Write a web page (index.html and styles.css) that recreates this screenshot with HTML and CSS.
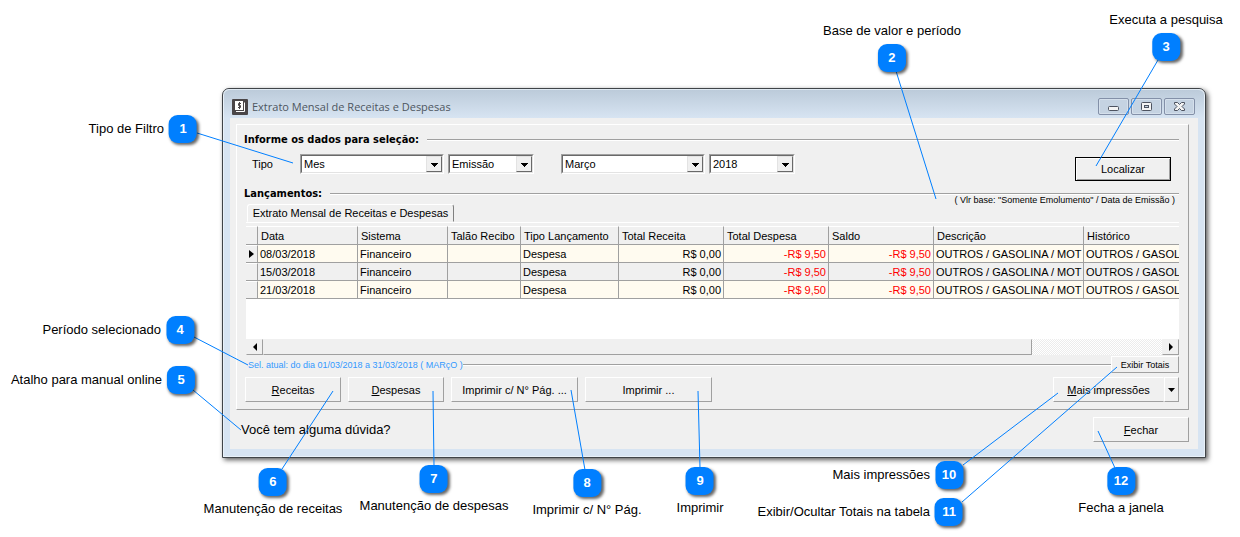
FILE: index.html
```html
<!DOCTYPE html>
<html lang="pt-BR">
<head>
    <meta charset="UTF-8">
    <meta name="viewport" content="width=device-width, initial-scale=1.0">
    <title>Extrato Mensal de Receitas e Despesas</title>
    <link rel="stylesheet" href="styles.css">
</head>
<body>
    <div class="canvas">
        <div class="window">
            <div class="titlebar">
                <svg class="app-icon" viewBox="0 0 16 16" width="16" height="16">
                    <rect width="16" height="16" rx="1" fill="#4a4648"/>
                    <path d="M3 2h8v9H3z" fill="#fff"/>
                    <path d="M4 12.500h8.500v-9" fill="none" stroke="#fff"/>
                    <path d="M9 4.500H6.500v2h2v2H6M7.500 3v7" fill="none" stroke="#4a4648"/>
                </svg>
                <h1>Extrato Mensal de Receitas e Despesas</h1>
                <div class="window-buttons">
                    <button type="button" aria-label="Minimizar">
                        <svg viewBox="0 0 29 15" width="29" height="15"><rect x="9.500" y="7.500" width="10" height="4" rx="1" fill="#f4f4f4" stroke="#4d5360"/></svg>
                    </button>
                    <button type="button" aria-label="Maximizar">
                        <svg viewBox="0 0 29 15" width="29" height="15"><rect x="9.500" y="3.500" width="10" height="8" rx="1" fill="#f4f4f4" stroke="#4d5360"/><rect x="12.500" y="6.500" width="4" height="2" fill="#c5d2df" stroke="#4d5360"/></svg>
                    </button>
                    <button type="button" aria-label="Fechar janela">
                        <svg viewBox="0 0 29 15" width="29" height="15"><path d="M9.500 3.500h3l2 2 2-2h3v1.500l-2.500 2.500 2.500 2.500v1.500h-3l-2-2-2 2h-3V10l2.500-2.500L9.500 5z" fill="#f4f4f4" stroke="#4d5360"/></svg>
                    </button>
                </div>
            </div>

            <div class="client">
                <div class="panel">
                    <div class="section-title"><h2>Informe os dados para seleção:</h2></div>

                    <div class="filters">
                        <label for="tipo">Tipo</label>
                        <div class="combo combo-wide">
                            <select id="tipo"><option>Mes</option></select>
                        </div>
                        <div class="combo combo-small">
                            <select aria-label="Base da data"><option>Emissão</option></select>
                        </div>
                        <div class="combo combo-wide combo-month">
                            <select aria-label="Mês"><option>Março</option></select>
                        </div>
                        <div class="combo combo-small">
                            <select aria-label="Ano"><option>2018</option></select>
                        </div>
                        <button type="button" class="btn btn-default">Localizar</button>
                    </div>

                    <div class="section-title"><h2>Lançamentos:</h2></div>

                    <div class="tab-row">
                        <button type="button" class="tab">Extrato Mensal de Receitas e Despesas</button>
                        <p class="base-info">( Vlr base: "Somente Emolumento" / Data de Emissão )</p>
                    </div>

                    <div class="grid">
                        <table>
                            <colgroup>
                                <col class="c-mark"><col class="c-data"><col class="c-sistema"><col class="c-talao"><col class="c-tipo">
                                <col class="c-valor"><col class="c-valor"><col class="c-valor"><col class="c-desc"><col class="c-desc">
                            </colgroup>
                            <thead>
                                <tr>
                                    <td class="mark"></td><th>Data</th><th>Sistema</th><th>Talão Recibo</th><th>Tipo Lançamento</th>
                                    <th>Total Receita</th><th>Total Despesa</th><th>Saldo</th><th>Descrição</th><th>Histórico</th>
                                </tr>
                            </thead>
                            <tbody>
                                <tr>
                                    <td class="mark"><svg viewBox="0 0 5 8" width="5" height="8"><path d="M0 0l5 4-5 4z"/></svg></td>
                                    <td>08/03/2018</td><td>Financeiro</td><td></td><td>Despesa</td>
                                    <td class="num">R$ 0,00</td><td class="num neg">-R$ 9,50</td><td class="num neg">-R$ 9,50</td>
                                    <td>OUTROS / GASOLINA / MOT</td><td>OUTROS / GASOL</td>
                                </tr>
                                <tr>
                                    <td class="mark"></td>
                                    <td>15/03/2018</td><td>Financeiro</td><td></td><td>Despesa</td>
                                    <td class="num">R$ 0,00</td><td class="num neg">-R$ 9,50</td><td class="num neg">-R$ 9,50</td>
                                    <td>OUTROS / GASOLINA / MOT</td><td>OUTROS / GASOL</td>
                                </tr>
                                <tr>
                                    <td class="mark"></td>
                                    <td>21/03/2018</td><td>Financeiro</td><td></td><td>Despesa</td>
                                    <td class="num">R$ 0,00</td><td class="num neg">-R$ 9,50</td><td class="num neg">-R$ 9,50</td>
                                    <td>OUTROS / GASOLINA / MOT</td><td>OUTROS / GASOL</td>
                                </tr>
                            </tbody>
                        </table>
                    </div>
                    <div class="scrollbar">
                        <button type="button" aria-label="Rolar para a esquerda"><svg viewBox="0 0 4 8" width="4" height="8"><path d="M4 0L0 4l4 4z"/></svg></button>
                        <div class="thumb"></div>
                        <div class="track"></div>
                        <button type="button" aria-label="Rolar para a direita"><svg viewBox="0 0 4 8" width="4" height="8"><path d="M0 0l4 4-4 4z"/></svg></button>
                    </div>

                    <div class="period">
                        <p>Sel. atual: do dia 01/03/2018 a 31/03/2018 ( MARçO )</p>
                        <button type="button" class="btn btn-tiny">Exibir Totais</button>
                    </div>

                    <div class="actions">
                        <button type="button" class="btn"><u>R</u>eceitas</button>
                        <button type="button" class="btn"><u>D</u>espesas</button>
                        <button type="button" class="btn btn-wide">Imprimir c/ N° Pág. ...</button>
                        <button type="button" class="btn btn-wide">Imprimir ...</button>
                        <div class="split">
                            <button type="button" class="btn"><u>M</u>ais impressões</button>
                            <button type="button" class="btn btn-arrow" aria-label="Abrir lista de impressões"><svg viewBox="0 0 7 4" width="7" height="4"><path d="M0 0h7L3.500 4z"/></svg></button>
                        </div>
                    </div>
                </div>

                <div class="footer">
                    <a href="#">Você tem alguma dúvida?</a>
                    <button type="button" class="btn"><u>F</u>echar</button>
                </div>
            </div>
        </div>

        <svg class="lines" viewBox="0 0 1240 537" width="1240" height="537">
            <path d="M197 133L293 163M896 71L936 199M1158 60L1096 166M194 337L248 365M193 390L241 430M282 469L333 391M434 466L433 391M585 470L571 390M700 468L698 391M963 465L1058 393M962 502L1117 367M1115 468L1098 431"/>
        </svg>

        <div class="callout side c1"><span>Tipo de Filtro</span><b>1</b></div>
        <div class="callout c2"><span>Base de valor e período</span><b>2</b></div>
        <div class="callout c3"><span>Executa a pesquisa</span><b>3</b></div>
        <div class="callout side c4"><span>Período selecionado</span><b>4</b></div>
        <div class="callout side c5"><span>Atalho para manual online</span><b>5</b></div>
        <div class="callout c6"><b>6</b><span>Manutenção de receitas</span></div>
        <div class="callout c7"><b>7</b><span>Manutenção de despesas</span></div>
        <div class="callout c8"><b>8</b><span>Imprimir c/ N° Pág.</span></div>
        <div class="callout c9"><b>9</b><span>Imprimir</span></div>
        <div class="callout side c10"><span>Mais impressões</span><b>10</b></div>
        <div class="callout side c11"><span>Exibir/Ocultar Totais na tabela</span><b>11</b></div>
        <div class="callout c12"><b>12</b><span>Fecha a janela</span></div>
    </div>
</body>
</html>
```
FILE: styles.css
```css
:root {
    --face: #f0f0f0;
    --frame: #d7e4f2;
    --shadow: #a0a0a0;
    --blue: #007fff;
}

*,
*::before,
*::after {
    box-sizing: border-box;
}

body {
    margin: 0;
    background: white;
    color: black;
    font-family: "Liberation Sans", Arial, sans-serif;
    font-size: 11px;
}

h1, h2, p {
    margin: 0;
}

button {
    padding: 0;
    font: inherit;
    color: inherit;
}

.canvas {
    position: relative;
    max-width: 1240px;
    padding: 88px 34px 78px 222px;
}

/* Janela */
.window {
    padding: 0 7px 8px;
    background: var(--frame);
    border: 1px solid #404448;
    border-radius: 7px 7px 0 0;
    box-shadow: inset 0 0 0 1px #e9f1f9, 2px 2px 5px rgba(0, 0, 0, 0.65);
}

.titlebar {
    display: flex;
    align-items: center;
    gap: 4px;
    height: 29px;
    margin: 0 -6px;
    padding: 5px 9px 0 8px;
    background: linear-gradient(#bccbda, #d7e4f2);
    border-top: 1px solid #e0eaf3;
    border-radius: 6px 6px 0 0;
}

.titlebar h1 {
    font: 11px/16px "Open Sans", sans-serif;
    color: #4d5660;
}

.window-buttons {
    display: flex;
    gap: 2px;
    margin-left: auto;
}

.window-buttons button {
    display: flex;
    width: 31px;
    height: 17px;
    background: #c5d3e2;
    border: 1px solid #8390a8;
    border-radius: 2px;
    box-shadow: inset 0 0 0 1px #d5e0ec;
}

.client {
    padding: 6px 9px 7px 6px;
    background: var(--face);
}

.panel {
    padding: 7px 9px 7px 7px;
    border: 1px solid;
    border-color: white var(--shadow) var(--shadow) white;
}

.section-title {
    display: flex;
    align-items: center;
    gap: 8px;
    height: 16px;
}

.section-title h2 {
    font: bold 11px/16px "DejaVu Sans Condensed", Tahoma, sans-serif;
}

.section-title::after {
    content: "";
    flex: 1;
    height: 2px;
    background: var(--shadow);
    border-bottom: 1px solid white;
}

/* Filtros */
.filters {
    display: flex;
    align-items: flex-start;
    height: 38px;
    padding: 6px 8px 0;
}

.filters label {
    width: 48px;
    line-height: 20px;
}

.combo {
    position: relative;
    height: 20px;
    margin-right: 4px;
    background: white;
    border: 1px solid;
    border-color: var(--shadow) white white var(--shadow);
}

.combo-wide {
    width: 144px;
}

.combo-small {
    width: 86px;
}

.combo-month {
    margin-left: 23px;
}

.combo select {
    display: block;
    width: 100%;
    height: 18px;
    padding: 0 20px 0 2px;
    appearance: none;
    font: inherit;
    color: black;
    background: white;
    border: 1px solid;
    border-color: #696969 #e3e3e3 #e3e3e3 #696969;
    border-radius: 0;
}

.combo::after {
    content: "";
    position: absolute;
    top: 1px;
    right: 1px;
    width: 16px;
    height: 16px;
    background: linear-gradient(black, black) 4px 6px / 7px 1px no-repeat,
                linear-gradient(black, black) 5px 7px / 5px 1px no-repeat,
                linear-gradient(black, black) 6px 8px / 3px 1px no-repeat,
                linear-gradient(black, black) 7px 9px / 1px 1px no-repeat,
                var(--face);
    border: 1px solid;
    border-color: #e3e3e3 #696969 #696969 #e3e3e3;
    pointer-events: none;
}

/* Botões */
.btn {
    width: 96px;
    height: 25px;
    background: var(--face);
    border: 1px solid;
    border-color: white var(--shadow) var(--shadow) white;
}

.btn-wide {
    width: 127px;
}

.btn-tiny {
    width: 68px;
    height: 17px;
    font-size: 9px;
}

.btn-default {
    height: 24px;
    margin: 3px 0 0 auto;
    border-color: black;
    box-shadow: inset 1px 1px white, inset -1px -1px var(--shadow);
}

/* Aba e tabela */
.tab-row {
    display: flex;
    justify-content: space-between;
    height: 21px;
    margin-left: 2px;
    border-bottom: 1px solid white;
}

.tab {
    align-self: flex-end;
    width: 207px;
    height: 18px;
    margin-left: 1px;
    background: var(--face);
    border: 1px solid;
    border-color: white #808080 var(--face) white;
    border-radius: 3px 3px 0 0;
    line-height: 16px;
}

.base-info {
    margin-top: -8px;
    padding-right: 4px;
    font-size: 9px;
    line-height: 12px;
}

.grid {
    height: 116px;
    margin-left: 2px;
    overflow: hidden;
    background: linear-gradient(var(--face) 4px, white 4px);
}

.grid table {
    width: 988px;
    margin-top: 3px;
    table-layout: fixed;
    border-collapse: separate;
    border-spacing: 0;
}

.c-mark { width: 12px; }
.c-data { width: 100px; }
.c-sistema { width: 90px; }
.c-talao { width: 73px; }
.c-tipo { width: 98px; }
.c-valor { width: 105px; }
.c-desc { width: 150px; }

.grid th,
.grid td {
    height: 18px;
    padding: 0 2px;
    border-right: 1px solid var(--shadow);
    border-bottom: 1px solid var(--shadow);
    font-weight: normal;
    line-height: 16px;
    white-space: nowrap;
    overflow: hidden;
}

.grid th,
.grid thead td {
    height: 19px;
    padding-left: 3px;
    background: var(--face);
    border-top: 1px solid white;
    text-align: left;
}

.grid tbody tr {
    background: #fffbf0;
}

.grid tbody tr:nth-child(even) {
    background: var(--face);
}

.grid .mark {
    padding: 0 0 0 3px;
    background: var(--face);
    border-top: 1px solid white;
}

.grid .mark svg {
    display: block;
}

.grid .num {
    text-align: right;
}

.grid .neg {
    color: red;
}

.scrollbar {
    display: flex;
    height: 16px;
    margin-left: 2px;
}

.scrollbar button,
.thumb {
    display: flex;
    align-items: center;
    justify-content: center;
    width: 17px;
    background: var(--face);
    border: 1px solid;
    border-color: var(--face) var(--shadow) var(--shadow) var(--face);
}

.thumb {
    flex: 770;
}

.track {
    flex: 130;
    background: repeating-conic-gradient(white 0 25%, #ececec 0 50%) 0 0 / 2px 2px;
}

/* Período e ações */
.period {
    display: flex;
    align-items: center;
    margin: 1px 0 4px 4px;
}

.period p {
    font-size: 9px;
    color: #3399ff;
}

.period::before {
    content: "";
    order: 1;
    flex: 1;
    height: 2px;
    background: var(--shadow);
    border-bottom: 1px solid white;
}

.period .btn {
    order: 2;
}

.actions {
    display: flex;
    gap: 7px;
    margin-left: 1px;
}

.split {
    display: flex;
    margin-left: auto;
}

.split .btn {
    width: 111px;
    border-right-color: var(--face);
}

.split .btn-arrow {
    display: flex;
    align-items: center;
    justify-content: center;
    width: 15px;
    border-right-color: var(--shadow);
}

.footer {
    display: flex;
    align-items: center;
    justify-content: space-between;
    padding: 7px 0 0 5px;
}

.footer a {
    font-size: 13px;
    color: black;
    text-decoration: none;
}

/* Legendas numeradas */
.lines {
    position: absolute;
    top: 0;
    left: 0;
    fill: none;
    stroke: var(--blue);
    pointer-events: none;
}

.callout {
    position: absolute;
    display: flex;
    flex-direction: column;
    align-items: center;
    gap: 5px;
    transform: translateX(-50%);
    font-size: 13px;
    line-height: 16px;
    white-space: nowrap;
}

.callout b {
    width: 28px;
    height: 28px;
    background: var(--blue);
    border-radius: 9px;
    box-shadow: 2px 2px 3px rgba(0, 0, 0, 0.6);
    color: white;
    line-height: 28px;
    text-align: center;
}

.callout.side {
    flex-direction: row;
    transform: translateX(-100%);
}

.c1 { left: 197px; top: 115px; }
.c2 { left: 892px; top: 23px; }
.c3 { left: 1166px; top: 12px; }
.c4 { left: 194px; top: 316px; }
.c5 { left: 195px; top: 366px; }
.c6 { left: 273px; top: 468px; }
.c7 { left: 434px; top: 465px; }
.c8 { left: 587px; top: 469px; }
.c9 { left: 700px; top: 467px; }
.c10 { left: 963px; top: 461px; }
.c11 { left: 963px; top: 498px; }
.c12 { left: 1121px; top: 467px; }
```
